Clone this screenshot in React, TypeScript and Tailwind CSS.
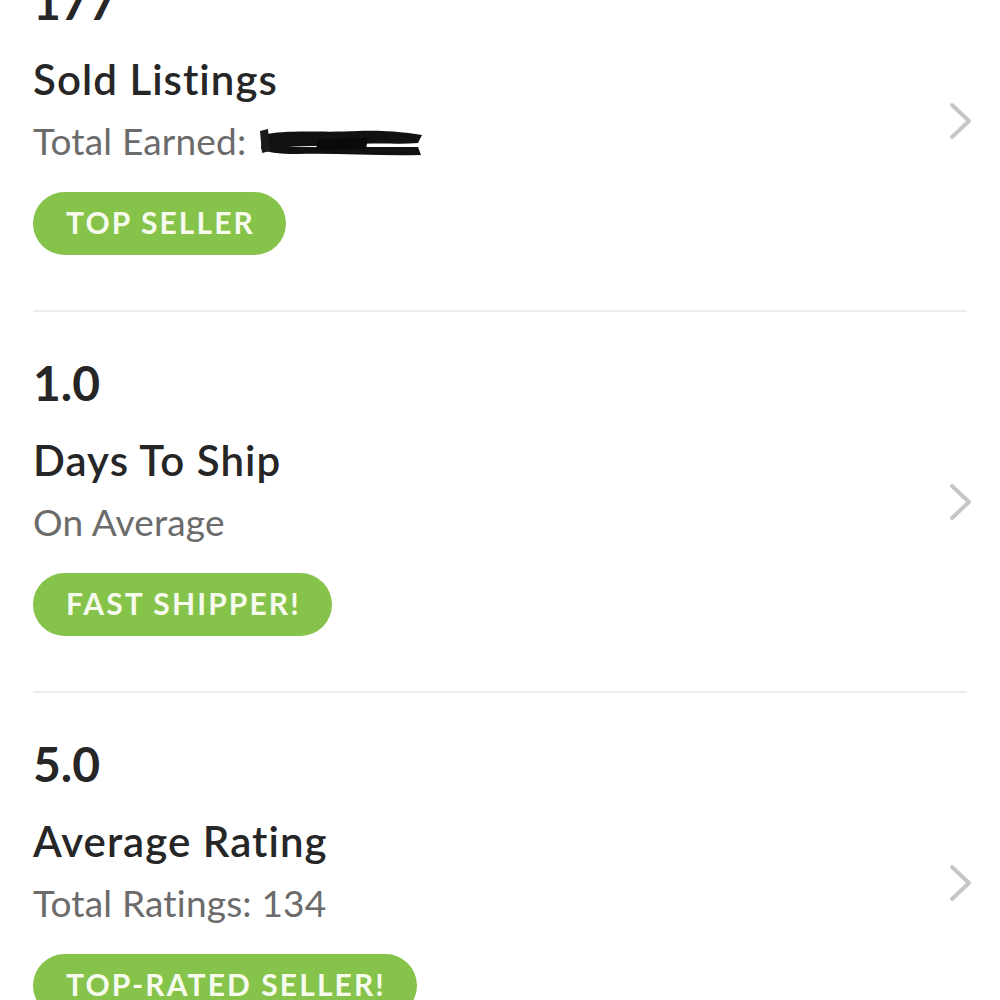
import React from "react";

function Chevron() {
  return (
    <svg width="26" height="38" viewBox="0 0 26 38" fill="none">
      <path d="M4 3 L21 19 L4 35" stroke="#c6c6ca" strokeWidth="4" strokeLinecap="round" strokeLinejoin="round" />
    </svg>
  );
}

function Redacted() {
  return (
    <svg width="168" height="36" viewBox="0 0 168 36" className="ml-[12px] -mb-[4px]">
      <path d="M4 10 C30 4, 60 8, 100 6 C130 5, 150 8, 164 10 L160 18 C140 20, 120 17, 90 20 C70 22, 50 20, 30 22 L160 22 L163 30 C120 31, 80 28, 40 29 C20 29, 8 27, 3 24 Z" fill="#111" />
      <path d="M2 6 L10 4 L12 26 L4 28 Z" fill="#1a1a1a" />
      <path d="M60 14 L110 13 L108 24 L58 25 Z" fill="#0a0a0a" />
    </svg>
  );
}

type Stat = { value: string; title: string; sub: React.ReactNode; badge: string };

const stats: Stat[] = [
  { value: "177", title: "Sold Listings", sub: <>Total Earned:<Redacted /></>, badge: "TOP SELLER" },
  { value: "1.0", title: "Days To Ship", sub: "On Average", badge: "FAST SHIPPER!" },
  { value: "5.0", title: "Average Rating", sub: "Total Ratings: 134", badge: "TOP-RATED SELLER!" },
];

export default function App() {
  return (
    <div className="w-[1000px] h-[1000px] overflow-hidden bg-white" style={{ fontFamily: "Lato, 'Open Sans', sans-serif" }}>
      <div className="-mt-[69px] px-[33px]">
        {stats.map((s, i) => (
          <div key={i} className="flex items-center border-b-2 border-[#ececec]">
            <div className="flex-1 pt-[43px] pb-[55px]">
              <div className="text-[48px] leading-[56px] font-bold text-[#262626]">{s.value}</div>
              <div className="mt-[25px] text-[42px] leading-[48px] font-semibold tracking-[0.025em] text-[#262626]">{s.title}</div>
              <div className="mt-[16px] text-[37px] leading-[44px] tracking-[0.005em] text-[#6b6b6b] flex items-center">{s.sub}</div>
              <div className="mt-[29px] inline-flex items-center h-[63px] pl-[33px] pr-[31px] pb-[3px] rounded-full bg-[#86c34b] text-[#f6fbee] text-[30px] font-bold tracking-[0.07em]">
                {s.badge}
              </div>
            </div>
            <div className="-mr-[7px]">
              <Chevron />
            </div>
          </div>
        ))}
      </div>
    </div>
  );
}
